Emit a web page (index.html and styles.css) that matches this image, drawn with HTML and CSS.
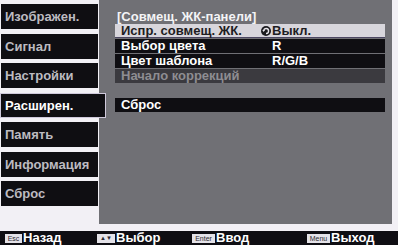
FILE: index.html
```html
<!DOCTYPE html>
<html lang="ru">
<head>
<meta charset="utf-8">
<link rel="stylesheet" href="styles.css">
</head>
<body>
<div class="screen">
  <div class="top">
    <nav class="menu">
      <div class="item">Изображен.</div>
      <div class="item">Сигнал</div>
      <div class="item">Настройки</div>
      <div class="item active">Расширен.</div>
      <div class="item">Память</div>
      <div class="item">Информация</div>
      <div class="item">Сброс</div>
    </nav>
    <section class="panel">
      <div class="title">[Совмещ. ЖК-панели]</div>
      <div class="rows">
        <div class="row sel"><span class="label">Испр. совмещ. ЖК.</span><span class="mark"><svg width="10" height="10" viewBox="0 0 10 10"><circle cx="5" cy="5" r="5" fill="#1a1a1e"/><path d="M2.6 4.6 A2.5 2.5 0 1 1 5 7.5" fill="none" stroke="#e8e6ec" stroke-width="1.4"/><path d="M1.3 3.9 L4 3.9 L2.6 6 Z" fill="#e8e6ec"/></svg></span><span class="value">Выкл.</span></div>
        <div class="row"><span class="label">Выбор цвета</span><span class="mark"></span><span class="value">R</span></div>
        <div class="row"><span class="label">Цвет шаблона</span><span class="mark"></span><span class="value">R/G/B</span></div>
        <div class="row dim"><span class="label">Начало коррекций</span></div>
        <div class="row reset"><span class="label">Сброс</span></div>
      </div>
    </section>
  </div>
  <footer class="bar">
    <div class="hint"><span class="key">Esc</span>Назад</div>
    <div class="hint"><span class="key arrows">▲▼</span>Выбор</div>
    <div class="hint"><span class="key wide">Enter</span>Ввод</div>
    <div class="hint"><span class="key wide">Menu</span>Выход</div>
  </footer>
</div>
</body>
</html>
```
FILE: styles.css
```css
html, body {
  margin: 0;
  padding: 0;
  background: #f2f0f5;
}
body {
  width: 398px;
  height: 245px;
  overflow: hidden;
  font-family: "Liberation Sans", Arial, sans-serif;
  font-weight: bold;
}
.screen {
  display: flex;
  flex-direction: column;
  width: 398px;
  height: 245px;
}
.top {
  display: flex;
  height: 231px;
  align-items: flex-start;
}
.menu {
  width: 99px;
  flex: none;
  display: flex;
  flex-direction: column;
  gap: 4.5px;
  padding-top: 4px;
}
.item {
  box-sizing: border-box;
  width: 97px;
  height: 25px;
  margin-left: 1px;
  background: #0f0e12;
  color: #bdbbc1;
  font-size: 13px;
  line-height: 25px;
  padding-left: 4px;
  white-space: nowrap;
}
.item.active {
  position: relative;
  z-index: 1;
  width: 106px;
  margin-left: 0;
  border: 1px solid #cfc9db;
  color: #ffffff;
  line-height: 23px;
}
.panel {
  box-sizing: border-box;
  width: 293px;
  height: 224px;
  flex: none;
  background: #707075;
  padding: 11px 0 0 16px;
}
.title {
  color: #f4f4f6;
  font-size: 13px;
  line-height: 12px;
  height: 13px;
  padding-left: 2px;
}
.rows {
  display: flex;
  flex-direction: column;
  gap: 1px;
  width: 270px;
}
.row {
  display: grid;
  grid-template-columns: 146px 11px 1fr;
  align-items: center;
  height: 14px;
  background: #0f0e12;
  color: #ffffff;
  font-size: 13px;
  line-height: 14px;
  white-space: nowrap;
}
.row .label {
  padding-left: 6px;
}
.row.sel {
  background: #d8d6dc;
  color: #1e1d22;
  box-shadow: inset 0 -1px 0 #4c4762;
}
.mark {
  display: flex;
  align-items: center;
  height: 14px;
}
.row.dim {
  background: #3b3a3f;
  color: #8e8d92;
}
.row.reset {
  margin-top: 14px;
}
.bar {
  height: 14px;
  background: #0f0e13;
  display: grid;
  grid-template-columns: 92px 95px 115px 1fr;
  padding-left: 5px;
  align-items: center;
  color: #ffffff;
  font-size: 13px;
  line-height: 14px;
}
.hint {
  display: flex;
  align-items: center;
  white-space: nowrap;
}
.key {
  display: inline-block;
  box-sizing: border-box;
  width: 17px;
  height: 9px;
  background: #e4e2e8;
  color: #2a2930;
  font-size: 7px;
  line-height: 9px;
  text-align: center;
  margin-right: 1px;
  font-weight: normal;
}
.key.arrows {
  width: 18px;
  font-size: 6px;
}
.key.wide {
  width: 23px;
}
```
